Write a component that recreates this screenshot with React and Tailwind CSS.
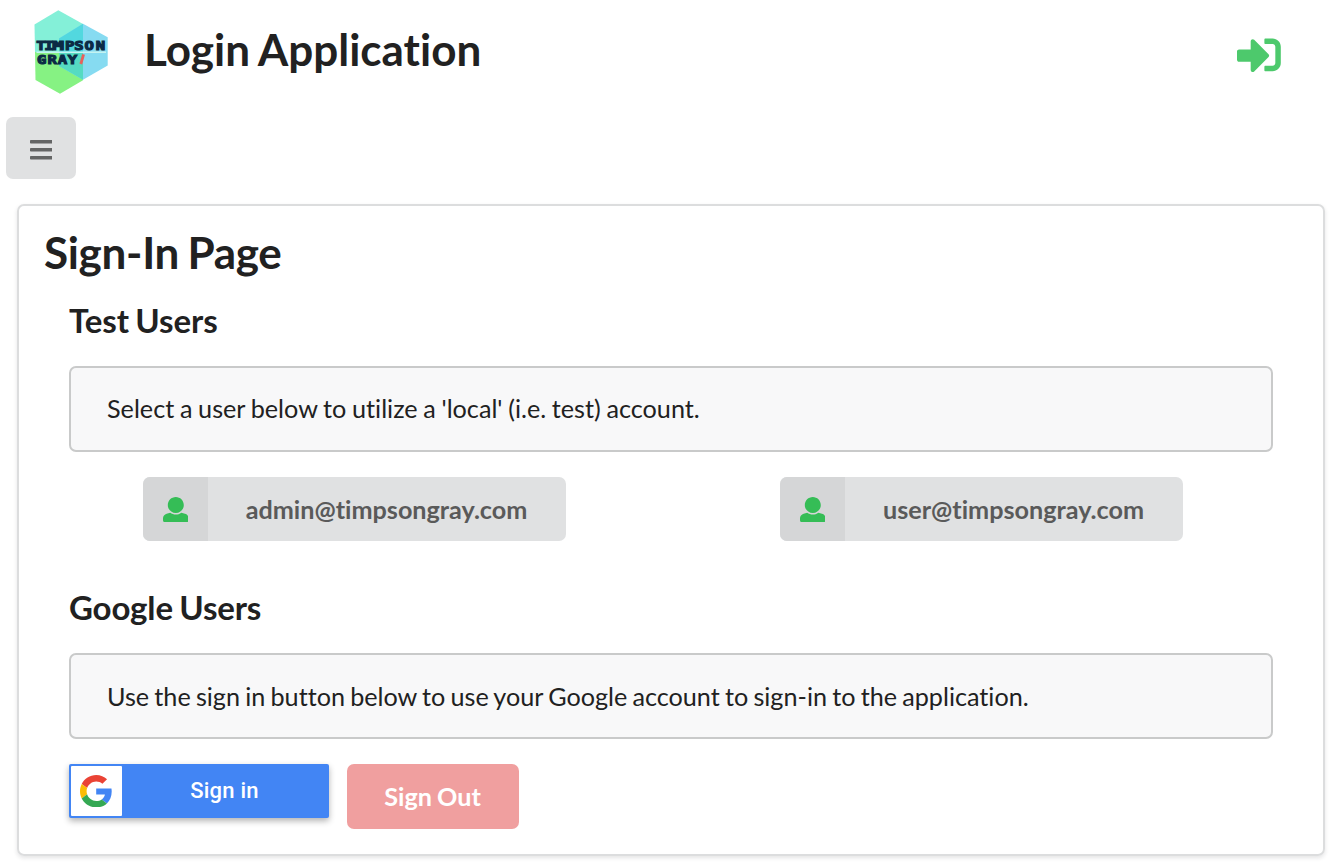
import { FaBars, FaSignInAlt } from "react-icons/fa";

function Logo() {
  return (
    <svg width="76" height="86" viewBox="0 0 76 86" className="block" aria-label="Timpson Gray">
      <path d="M25.3 1.2 50 15V43H2L1.5 15.5Z" fill="#84f0d8" />
      <path d="M2 43H50V71.3L27 84.8 2.5 71Z" fill="#86f283" />
      <path d="M50 14.8 74.7 28.3V56.5L50 70.8 26 57V29.5Z" fill="#86dbf1" />
      <path d="M50 14.8V43H26V29.5Z" fill="#52d8df" />
      <path d="M26 43H50V70.8L26 57Z" fill="#55dbc2" />
      <path d="M3.5 43.2H73" stroke="#c4f3f1" strokeWidth="1.6" />
      <g
        fill="#0b2a45"
        stroke="#0b2a45"
        strokeWidth="1.1"
        fontFamily="'DejaVu Sans Mono', monospace"
        fontWeight="700"
        fontSize="13"
        textAnchor="middle"
      >
        <text transform="scale(1.2 1)" x="6.7 13.4" y="40.6">TI</text>
        <text transform="scale(1.5 1)" x="16.8" y="40.6">M</text>
        <text transform="scale(1.2 1)" x="30.6 38.2 46.9 56.2" y="40.6">PSON</text>
        <text transform="scale(1.2 1)" x="7.2 16.1 24.5 32.8" y="54.7">GRAY</text>
      </g>
      <path d="M50.6 45.3 47.8 55" stroke="#e8615c" strokeWidth="2.8" />
    </svg>
  );
}

function UserIcon() {
  return (
    <svg viewBox="0 0 512 512" className="size-[25.6px]" fill="#35bd56">
      <path d="M256 0c88.366 0 160 71.634 160 160s-71.634 160-160 160S96 248.366 96 160 167.634 0 256 0zm183.283 333.821l-71.313-17.828c-74.923 53.89-165.738 41.864-223.94 0l-71.313 17.828C29.981 344.505 0 382.903 0 426.955V464c0 26.51 21.49 48 48 48h416c26.51 0 48-21.49 48-48v-37.045c0-44.052-29.981-82.45-72.717-93.134z" />
    </svg>
  );
}

function UserButton({ email, className }) {
  return (
    <button className={`flex h-16 overflow-hidden rounded-[7px] bg-[#e0e1e2] ${className}`}>
      <span className="flex h-full w-[65px] items-center justify-center bg-[#d5d6d7] pt-px pr-[0.4px]">
        <UserIcon />
      </span>
      <span className="flex h-full flex-1 items-center justify-center pt-px pr-px text-[25.2px] font-bold text-[#5a5a5a]">
        {email}
      </span>
    </button>
  );
}

function Message({ children, className }) {
  return (
    <div className={`flex h-[86px] items-center rounded-[7px] border-2 border-[#c9caca] bg-[#f8f8f9] pl-9 text-[25.2px] text-[#212121] ${className}`}>
      <p>{children}</p>
    </div>
  );
}

function GoogleButton() {
  return (
    <button className="flex h-[54px] w-[260px] rounded-[2px] bg-[#4285f4] p-0.5 shadow-[0_3px_6px_rgba(0,0,0,0.3)]">
      <span className="flex h-[50px] w-[51px] items-center justify-center rounded-[1px] bg-white pr-[0.5px]">
        <svg viewBox="0 0 48 48" className="size-[32.4px]">
          <path fill="#EA4335" d="M24 9.5c3.54 0 6.71 1.22 9.21 3.6l6.85-6.85C35.9 2.38 30.47 0 24 0 14.62 0 6.51 5.38 2.56 13.22l7.98 6.19C12.43 13.72 17.74 9.5 24 9.5z" />
          <path fill="#4285F4" d="M46.98 24.55c0-1.57-.15-3.09-.38-4.55H24v9.02h12.94c-.58 2.96-2.26 5.48-4.78 7.18l7.73 6c4.51-4.18 7.09-10.36 7.09-17.65z" />
          <path fill="#FBBC05" d="M10.53 28.59c-.48-1.45-.76-2.99-.76-4.59s.27-3.14.76-4.59l-7.98-6.19C.92 16.46 0 20.12 0 24c0 3.88.92 7.54 2.56 10.78l7.97-6.19z" />
          <path fill="#34A853" d="M24 48c6.48 0 11.93-2.13 15.89-5.81l-7.73-6c-2.15 1.45-4.92 2.3-8.16 2.3-6.26 0-11.57-4.22-13.47-9.91l-7.98 6.19C6.51 42.62 14.62 48 24 48z" />
        </svg>
      </span>
      <span className="flex h-full flex-1 items-center justify-center pb-0.5 font-['Roboto',sans-serif] text-[22px] font-medium tracking-[0.25px] text-white">
        Sign in
      </span>
    </button>
  );
}

export default function App() {
  return (
    <div className="h-[868px] overflow-hidden bg-white font-['Lato',sans-serif] text-[#212121] [font-variant-ligatures:none]">
      <header className="flex h-[117px] items-start pr-[55.5px] pl-[33px]">
        <div className="pt-[9px]">
          <Logo />
        </div>
        <h1 className="ml-[35px] pt-5 text-[44px] leading-[58px] font-bold [word-spacing:-1.5px]">
          Login Application
        </h1>
        <FaSignInAlt className="mt-[33px] ml-auto size-[43.8px] text-[#4dc96c]" />
      </header>
      <button className="ml-1.5 flex h-[62px] w-[70px] items-center justify-center rounded-[7px] bg-[#e0e1e2] pt-[3px] text-[#646565]">
        <FaBars className="h-[25.6px] w-[22.4px]" />
      </button>
      <main className="mt-[25px] mr-[11px] ml-[17px] h-[652px] rounded-[7px] border-2 border-[#dcddde] px-[25px] shadow-[0_2px_4px_rgba(34,36,38,0.12)]">
        <h1 className="pt-[17px] text-[44px] leading-[58px] font-bold tracking-[-0.3px] [word-spacing:-2px]">Sign-In Page</h1>
        <div className="px-[25px]">
          <h2 className="mt-[19px] text-[33px] leading-10 font-bold tracking-[-0.08px] [word-spacing:-1.5px]">Test Users</h2>
          <div className="mt-[26px]">
            <Message className="pb-px [word-spacing:-0.75px]">Select a user below to utilize a 'local' (i.e. test) account.</Message>
          </div>
          <div className="mt-[25px] flex pl-[74px]">
            <UserButton email="admin@timpsongray.com" className="w-[423px]" />
            <UserButton email="user@timpsongray.com" className="ml-[214px] w-[403px]" />
          </div>
          <h2 className="mt-[46px] text-[33px] leading-10 font-bold tracking-[-0.15px] [word-spacing:-1.5px]">Google Users</h2>
          <div className="mt-[26px]">
            <Message className="pt-px [word-spacing:-1.25px]">Use the sign in button below to use your Google account to sign-in to the application.</Message>
          </div>
          <div className="mt-[25px] flex items-start gap-[18px]">
            <GoogleButton />
            <button className="flex h-[65px] w-[172px] items-center justify-center rounded-[7px] bg-[#f09f9f] pr-px text-[25.2px] font-bold text-white [word-spacing:-1px]">
              Sign Out
            </button>
          </div>
        </div>
      </main>
    </div>
  );
}
